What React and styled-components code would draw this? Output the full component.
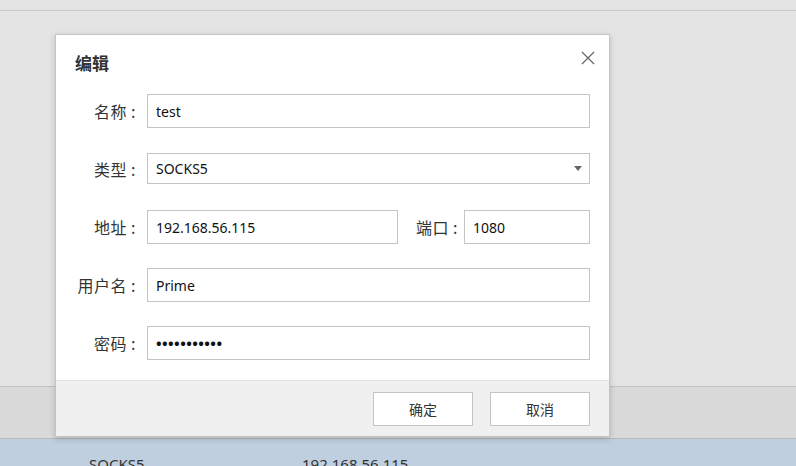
import React, { useState } from 'react';
import styled, { createGlobalStyle } from 'styled-components';

const GlobalStyle = createGlobalStyle`
  html, body {
    margin: 0;
    padding: 0;
    background: #e4e4e4;
    font-family: "Noto Sans", "Noto Sans CJK SC", sans-serif;
    color: #333;
  }
  * {
    box-sizing: border-box;
  }
`;

const App = () => {
  const [name, setName] = useState('test');
  const [type, setType] = useState('SOCKS5');
  const [host, setHost] = useState('192.168.56.115');
  const [port, setPort] = useState('1080');
  const [user, setUser] = useState('Prime');
  const [pass, setPass] = useState('abcdefghijk');

  return (
    <Page>
      <GlobalStyle />
      <TopBar />
      <Content />
      <Band />
      <TableRow>
        <Cell $width='213px'>SOCKS5</Cell>
        <Cell>192.168.56.115</Cell>
      </TableRow>

      <Dialog>
        <Header>
          <Title>编辑</Title>
          <CloseButton aria-label='close'>
            <svg width='14' height='14' viewBox='0 0 14 14'>
              <path d='M1 1 L13 13 M13 1 L1 13' stroke='#666' strokeWidth='1.2' fill='none' />
            </svg>
          </CloseButton>
        </Header>

        <Form>
          <Row>
            <Label>名称 :</Label>
            <Input value={name} onChange={(e) => setName(e.target.value)} />
          </Row>
          <Row>
            <Label>类型 :</Label>
            <SelectWrap>
              <Select value={type} onChange={(e) => setType(e.target.value)}>
                <option>SOCKS5</option>
                <option>HTTP</option>
              </Select>
              <Caret />
            </SelectWrap>
          </Row>
          <Row>
            <Label>地址 :</Label>
            <Input $width='251px' value={host} onChange={(e) => setHost(e.target.value)} />
            <Label $inline>端口 :</Label>
            <Input value={port} onChange={(e) => setPort(e.target.value)} />
          </Row>
          <Row>
            <Label>用户名 :</Label>
            <Input value={user} onChange={(e) => setUser(e.target.value)} />
          </Row>
          <Row>
            <Label>密码 :</Label>
            <Input $secret type='password' value={pass} onChange={(e) => setPass(e.target.value)} />
          </Row>
        </Form>

        <Footer>
          <Button>确定</Button>
          <Button>取消</Button>
        </Footer>
      </Dialog>
    </Page>
  );
};

export default App;

const Page = styled.div`
  position: relative;
  height: 466px;
  display: flex;
  flex-direction: column;
  overflow: hidden;
`;

const TopBar = styled.div`
  height: 11px;
  border-bottom: 1px solid #cacaca;
`;

const Content = styled.div`
  flex: 1;
`;

const Band = styled.div`
  height: 53px;
  background: #d9d9d9;
  border-top: 1px solid #c2c2c2;
  border-bottom: 1px solid #b9b9b9;
`;

const TableRow = styled.div`
  height: 27px;
  background: #bfcfe0;
  display: flex;
  padding: 15px 0 0 89px;
  font-size: 15px;
  color: #333;
`;

const Cell = styled.div`
  width: ${(p) => p.$width || 'auto'};
  flex-shrink: 0;
  line-height: 20px;
`;

const Dialog = styled.div`
  position: absolute;
  left: 55px;
  top: 34px;
  width: 555px;
  background: #fff;
  border: 1px solid #c4c4c4;
  box-shadow: 0 2px 6px rgba(0, 0, 0, 0.18);
`;

const Header = styled.div`
  position: relative;
  height: 59px;
  padding: 15px 0 0 19px;
`;

const Title = styled.div`
  font-family: "Noto Sans CJK SC", sans-serif;
  font-size: 17px;
  font-weight: bold;
  line-height: 26px;
  color: #333;
`;

const CloseButton = styled.button`
  position: absolute;
  right: 13px;
  top: 15px;
  width: 16px;
  height: 16px;
  padding: 0;
  border: none;
  background: none;
  display: flex;
  align-items: center;
  justify-content: center;
`;

const Form = styled.div`
  display: flex;
  flex-direction: column;
  gap: 24px;
  padding: 0 19px 20px 0;
`;

const Row = styled.div`
  display: flex;
  align-items: center;
  height: 34px;
`;

const Label = styled.label`
  width: ${(p) => (p.$inline ? 'auto' : '80px')};
  margin: ${(p) => (p.$inline ? '0 6px 0 18px' : '0 11px 0 0')};
  text-align: right;
  font-family: "Noto Sans CJK SC", sans-serif;
  font-size: 16px;
  letter-spacing: 0.5px;
  color: #333;
  flex-shrink: 0;
  white-space: nowrap;
`;

const Input = styled.input`
  ${(p) => (p.$width ? `width: ${p.$width}; flex-shrink: 0;` : 'flex: 1; min-width: 0;')}
  height: 34px;
  border: 1px solid #c4c4c4;
  border-radius: 0;
  padding: 0 8px;
  font-family: "Noto Sans", "Noto Sans CJK SC", sans-serif;
  font-size: ${(p) => (p.$secret ? '15px' : '14px')};
  font-weight: ${(p) => (p.$secret ? 'bold' : 'normal')};
  letter-spacing: ${(p) => (p.$secret ? '0.4px' : 'normal')};
  color: #111;
  outline: none;
  background: #fff;
`;

const SelectWrap = styled.div`
  position: relative;
  flex: 1;
  height: 31px;
  align-self: flex-start;
  margin-top: 1px;
`;

const Select = styled.select`
  appearance: none;
  width: 100%;
  height: 31px;
  border: 1px solid #c4c4c4;
  border-radius: 0;
  padding: 0 8px;
  font-family: "Noto Sans", sans-serif;
  font-size: 14px;
  color: #111;
  background: #fff;
  outline: none;
`;

const Caret = styled.span`
  position: absolute;
  right: 8px;
  top: 13px;
  width: 0;
  height: 0;
  border-left: 4px solid transparent;
  border-right: 4px solid transparent;
  border-top: 5px solid #666;
  pointer-events: none;
`;

const Footer = styled.div`
  height: 56px;
  background: #f0f0f0;
  border-top: 1px solid #e2e2e2;
  display: flex;
  justify-content: flex-end;
  align-items: center;
  gap: 17px;
  padding-right: 19px;
`;

const Button = styled.button`
  width: 100px;
  height: 34px;
  background: #fff;
  border: 1px solid #c4c4c4;
  border-radius: 0;
  font-family: "Noto Sans CJK SC", sans-serif;
  font-size: 14px;
  color: #333;
  cursor: pointer;
`;
